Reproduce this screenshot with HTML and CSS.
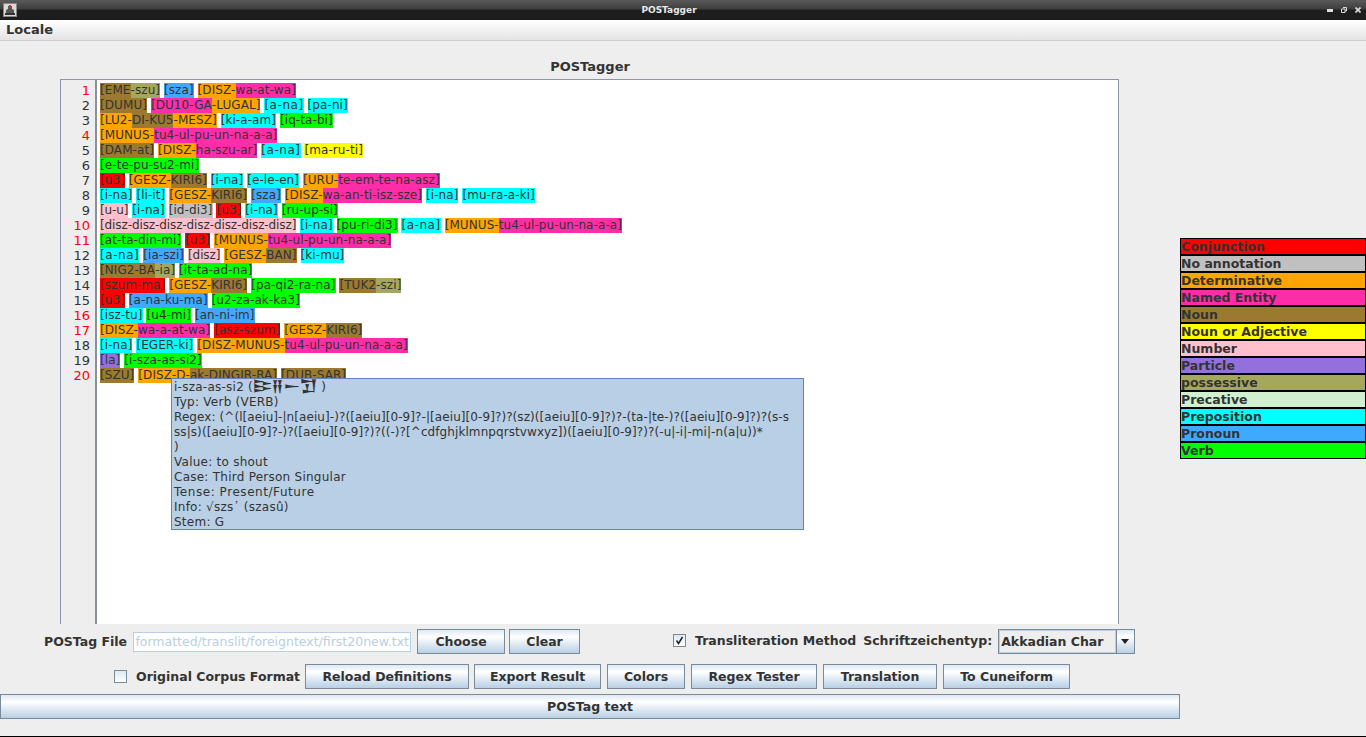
FILE: index.html
```html
<!DOCTYPE html>
<html lang="en">
<head>
    <meta charset="UTF-8">
    <meta name="viewport" content="width=device-width, initial-scale=1.0">
    <title>POSTagger</title>
    <link rel="stylesheet" href="styles.css">
</head>
<body>
    <div class="titlebar">
        <svg class="app-icon" width="14" height="14" viewBox="0 0 14 14">
            <rect x="0.5" y="0.5" width="13" height="13" fill="#d8d8d8" stroke="#888"/>
            <path d="M5 3h4v3l2 1v3H3V7l2-1z" fill="#555"/>
            <rect x="6" y="2" width="2" height="3" fill="#c33"/>
            <rect x="2" y="10" width="10" height="2" fill="#333"/>
        </svg>
        <span class="titlebar-text">POSTagger</span>
        <div class="window-buttons">
            <svg width="6" height="3" viewBox="0 0 6 3"><rect width="6" height="3" fill="#ddd"/></svg>
            <svg width="6" height="6" viewBox="0 0 6 6"><path d="M2 .5h3.500v3.500h-1.500M.5 2h3.500v3.500h-3.500z" fill="none" stroke="#ddd"/></svg>
            <svg width="6" height="6" viewBox="0 0 6 6"><path d="M.5 .5l5 5M5.500 .5l-5 5" stroke="#ddd" stroke-width="1.600"/></svg>
        </div>
    </div>
    <div class="menubar"><span>Locale</span></div>

    <div class="content">
        <div class="left">
            <div class="heading">POSTagger</div>
            <div class="editor">
                <div class="gutter">
                    <div class="err">1</div><div>2</div><div>3</div><div class="err">4</div><div>5</div>
                    <div>6</div><div>7</div><div>8</div><div>9</div><div class="err">10</div>
                    <div class="err">11</div><div>12</div><div>13</div><div>14</div><div>15</div>
                    <div class="err">16</div><div class="err">17</div><div>18</div><div>19</div><div class="err">20</div>
                </div>
                <div class="text">
                    <div><span class="noun">[EME</span><span class="poss">-szu]</span> <span class="pron">[sza]</span> <span class="det">[DISZ-</span><span class="ne">wa-at-wa]</span></div>
                    <div><span class="noun">[DUMU]</span> <span class="ne">[DU10-GA</span><span class="det">-LUGAL]</span> <span class="prep ana">[a-na]</span> <span class="prep">[pa-ni]</span></div>
                    <div><span class="det">[LU2-</span><span class="noun">DI-KU5</span><span class="det">-MESZ]</span> <span class="prep">[ki-a-am]</span> <span class="verb">[iq-ta-bi]</span></div>
                    <div><span class="det">[MUNUS-</span><span class="ne">tu4-ul-pu-un-na-a-a]</span></div>
                    <div><span class="noun">[DAM-at]</span> <span class="det">[DISZ-</span><span class="ne">ha-szu-ar]</span> <span class="prep ana">[a-na]</span> <span class="adj">[ma-ru-ti]</span></div>
                    <div><span class="verb">[e-te-pu-su2-mi]</span></div>
                    <div><span class="conj">[u3]</span> <span class="det">[GESZ-</span><span class="noun">KIRI6]</span> <span class="prep">[i-na]</span> <span class="prep">[e-le-en]</span> <span class="det">[URU-</span><span class="ne">te-em-te-na-asz]</span></div>
                    <div><span class="prep">[i-na]</span> <span class="prep">[li-it]</span> <span class="det">[GESZ-</span><span class="noun">KIRI6]</span> <span class="pron">[sza]</span> <span class="det">[DISZ-</span><span class="ne">wa-an-ti-isz-sze]</span> <span class="prep">[i-na]</span> <span class="prep">[mu-ra-a-ki]</span></div>
                    <div><span class="num">[u-u]</span> <span class="prep">[i-na]</span> <span class="none">[id-di3]</span> <span class="conj">[u3]</span> <span class="prep">[i-na]</span> <span class="verb">[ru-up-si]</span></div>
                    <div><span class="num">[disz-disz-disz-disz-disz-disz-disz]</span> <span class="prep">[i-na]</span> <span class="verb">[pu-ri-di3]</span> <span class="prep ana">[a-na]</span> <span class="det">[MUNUS-</span><span class="ne">tu4-ul-pu-un-na-a-a]</span></div>
                    <div><span class="verb">[at-ta-din-mi]</span> <span class="conj">[u3]</span> <span class="det">[MUNUS-</span><span class="ne">tu4-ul-pu-un-na-a-a]</span></div>
                    <div><span class="prep ana">[a-na]</span> <span class="pron">[ia-szi]</span> <span class="num">[disz]</span> <span class="det">[GESZ-</span><span class="noun">BAN]</span> <span class="prep">[ki-mu]</span></div>
                    <div><span class="noun">[NIG2-BA</span><span class="poss">-ia]</span> <span class="verb">[it-ta-ad-na]</span></div>
                    <div><span class="conj">[szum-ma]</span> <span class="det">[GESZ-</span><span class="noun">KIRI6]</span> <span class="verb">[pa-qi2-ra-na]</span> <span class="noun">[TUK2</span><span class="poss">-szi]</span></div>
                    <div><span class="conj">[u3]</span> <span class="pron">[a-na-ku-ma]</span> <span class="verb">[u2-za-ak-ka3]</span></div>
                    <div><span class="prep">[isz-tu]</span> <span class="verb">[u4-mi]</span> <span class="pron">[an-ni-im]</span></div>
                    <div><span class="det">[DISZ-</span><span class="ne">wa-a-at-wa]</span> <span class="conj">[asz-szum]</span> <span class="det">[GESZ-</span><span class="noun">KIRI6]</span></div>
                    <div><span class="prep">[i-na]</span> <span class="prep">[EGER-ki]</span> <span class="det">[DISZ-MUNUS-</span><span class="ne">tu4-ul-pu-un-na-a-a]</span></div>
                    <div><span class="part">[la]</span> <span class="verb">[i-sza-as-si2]</span></div>
                    <div><span class="noun">[SZU]</span> <span class="det">[DISZ-D-</span><span class="noun">ak-DINGIR-RA]</span> <span class="noun">[DUB-SAR]</span></div>
                </div>
                <div class="tooltip">
                    <div>i-sza-as-si2 (<span class="cuneiform">𒄿𒍝𒀸𒋛</span> )</div>
                    <div>Typ: Verb (VERB)</div>
                    <div class="regex">Regex: (^(l[aeiu]-|n[aeiu]-)?([aeiu][0-9]?-|[aeiu][0-9]?)?(sz)([aeiu][0-9]?)?-(ta-|te-)?([aeiu][0-9]?)?(s-s</div>
                    <div class="regex">ss|s)([aeiu][0-9]?-)?([aeiu][0-9]?)?((-)?[^cdfghjklmnpqrstvwxyz])([aeiu][0-9]?)?(-u|-i|-mi|-n(a|u))*</div>
                    <div>)</div>
                    <div>Value: to shout</div>
                    <div>Case: Third Person Singular</div>
                    <div class="tense">Tense: Present/Future</div>
                    <div>Info: √szs᾿ (szasû)</div>
                    <div>Stem: G</div>
                </div>
            </div>

            <div class="row-file">
                <label class="field-label">POSTag File</label>
                <input class="file-input" type="text" value="preformatted/translit/foreigntext/first20new.txt" disabled>
                <button class="btn btn-choose">Choose</button>
                <button class="btn btn-clear">Clear</button>
                <span class="check checked">
                    <svg width="9" height="9" viewBox="0 0 9 9"><path d="M1.500 4.500l2 3 4-6.500" fill="none" stroke="#222" stroke-width="1.500"/></svg>
                </span>
                <span class="field-label translit">Transliteration Method</span>
                <span class="field-label schrift">Schriftzeichentyp:</span>
                <div class="combo">
                    <span class="combo-value">Akkadian Char</span>
                    <span class="combo-arrow"></span>
                </div>
            </div>

            <div class="row-actions">
                <span class="check"></span>
                <span class="field-label corpus">Original Corpus Format</span>
                <button class="btn btn-reload">Reload Definitions</button>
                <button class="btn btn-export">Export Result</button>
                <button class="btn btn-colors">Colors</button>
                <button class="btn btn-regex">Regex Tester</button>
                <button class="btn btn-translation">Translation</button>
                <button class="btn btn-cuneiform">To Cuneiform</button>
            </div>

            <button class="btn btn-wide">POSTag text</button>
        </div>

        <div class="legend">
            <div class="conj">Conjunction</div>
            <div class="none">No annotation</div>
            <div class="det">Determinative</div>
            <div class="ne">Named Entity</div>
            <div class="noun">Noun</div>
            <div class="adj">Noun or Adjective</div>
            <div class="num">Number</div>
            <div class="part">Particle</div>
            <div class="poss">possessive</div>
            <div class="prec">Precative</div>
            <div class="prep">Preposition</div>
            <div class="pron">Pronoun</div>
            <div class="verb">Verb</div>
        </div>
    </div>
</body>
</html>
```

FILE: styles.css
```css
* {
    box-sizing: border-box;
}
body {
    font-family: "DejaVu Sans", sans-serif;
    font-size: 12px;
    color: #333;
    margin: 0;
    height: 737px;
    overflow: hidden;
    background-color: #eeeeee;
    border-bottom: 1px solid #000;
    display: flex;
    flex-direction: column;
}

/* window chrome */
.titlebar {
    height: 20px;
    flex: none;
    background: linear-gradient(#5a5a5a 0, #3e3e3e 9px, #1e1e1e 10px, #1c1c1c 100%);
    display: flex;
    align-items: center;
    padding: 0 5px 0 3px;
}
.titlebar-text {
    flex: 1;
    text-align: center;
    color: #e8e8e8;
    font-size: 9px;
    font-weight: bold;
    padding-right: 6px;
}
.window-buttons {
    display: flex;
    align-items: center;
    gap: 8px;
}
.menubar {
    height: 21px;
    flex: none;
    background: linear-gradient(#fff, #e4e4e4);
    border-bottom: 1px solid #ccc;
    padding: 2px 6px;
    font-size: 13px;
    font-weight: bold;
    line-height: 16px;
}

.content {
    flex: 1;
    display: flex;
    min-height: 0;
}
.left {
    width: 1180px;
    flex: none;
    display: flex;
    flex-direction: column;
}
.heading {
    text-align: center;
    font-size: 13px;
    font-weight: bold;
    line-height: 16px;
    padding-top: 18px;
    height: 38px;
}

/* text pane */
.editor {
    position: relative;
    flex: none;
    height: 545px;
    width: 1059px;
    margin-left: 60px;
    background-color: white;
    border: 1px solid #8a97a8;
    border-bottom: none;
    display: flex;
}
.gutter {
    width: 36px;
    background-color: #eeeeee;
    border-right: 2px solid #8a8f99;
    padding: 3px 5px 0 0;
    text-align: right;
    font-size: 13px;
    line-height: 15px;
    flex: none;
}
.err {
    color: red;
}
.text {
    padding: 3px 0 0 3px;
    line-height: 15px;
    letter-spacing: 0.08px;
}
.text div {
    height: 15px;
    white-space: pre;
}
.text span {
    display: inline-block;
    height: 15px;
}
.text .num {
    letter-spacing: -0.1px;
}
.text .ana {
    letter-spacing: 0.55px;
}
.tooltip {
    position: absolute;
    left: 110px;
    top: 298px;
    width: 633px;
    height: 152px;
    background-color: #b8cfe5;
    border: 1px solid #6382bf;
    padding: 0 2px;
    line-height: 15px;
    white-space: nowrap;
    letter-spacing: 0.25px;
}
.tooltip .regex {
    letter-spacing: 0.08px;
}
.tooltip .tense {
    letter-spacing: 0.55px;
}
.cuneiform {
    font-size: 15px;
    font-weight: bold;
    line-height: 14px;
}

/* annotation colours */
.conj { background-color: #ff0000; }
.none { background-color: #c0c0c0; }
.det { background-color: #ffa500; }
.ne { background-color: #ff2da8; }
.noun { background-color: #9b7a30; }
.adj { background-color: #ffff00; }
.num { background-color: #ffc0cb; }
.part { background-color: #9370db; }
.poss { background-color: #a5a85c; }
.prec { background-color: #d0f0d0; }
.prep { background-color: #00ffff; }
.pron { background-color: #3fa9ff; }
.verb { background-color: #00ff00; }

.legend {
    width: 186px;
    height: 221px;
    margin-top: 197px;
    padding: 1px;
    background-color: #000;
    display: flex;
    flex-direction: column;
    gap: 2px;
    font-size: 12.5px;
    font-weight: bold;
    line-height: 15px;
}
.legend div {
    height: 15px;
    overflow: hidden;
}

/* controls */
.btn {
    font-family: "DejaVu Sans", sans-serif;
    font-size: 12.5px;
    font-weight: bold;
    color: #333;
    height: 25px;
    padding: 0;
    border: 1px solid #7a8a99;
    background: linear-gradient(#dde8f3 0, #fff 30%, #b8cfe5 100%);
}
.field-label {
    font-size: 12.5px;
    font-weight: bold;
}
.row-file {
    display: flex;
    align-items: center;
    height: 25px;
    margin-top: 5px;
    padding-left: 44px;
}
.file-input {
    width: 278px;
    height: 20px;
    margin-left: 6px;
    padding: 0 1px;
    border: 1px solid #b8cfe5;
    background-color: white;
    color: #b8cfe5;
    font-family: "DejaVu Sans", sans-serif;
    font-size: 12.5px;
    direction: rtl;
    opacity: 1;
}
.btn-choose {
    width: 88px;
    margin-left: 6px;
}
.btn-clear {
    width: 71px;
    margin-left: 4px;
}
.check {
    width: 13px;
    height: 13px;
    border: 1px solid #7a8a99;
    background: linear-gradient(#dde8f3, #fff);
    display: flex;
    align-items: center;
    justify-content: center;
    flex: none;
}
.check.checked {
    margin-left: 93px;
    margin-bottom: 2px;
}
.translit {
    margin-left: 9px;
    margin-bottom: 2px;
}
.schrift {
    margin-left: 7px;
    margin-bottom: 2px;
}
.combo {
    display: flex;
    width: 137px;
    height: 25px;
    margin-left: 6px;
    border: 1px solid #7a8a99;
}
.combo-value {
    flex: 1;
    background-color: #eeeeee;
    border: 1px solid #b8cfe5;
    font-size: 12.5px;
    font-weight: bold;
    line-height: 21px;
    padding-left: 1px;
}
.combo-arrow {
    width: 18px;
    border-left: 1px solid #7a8a99;
    background: linear-gradient(#dde8f3 0, #fff 30%, #b8cfe5 100%);
    position: relative;
}
.combo-arrow::after {
    content: "";
    position: absolute;
    left: 4px;
    top: 9px;
    border-left: 4px solid transparent;
    border-right: 4px solid transparent;
    border-top: 5px solid #222;
}
.row-actions {
    display: flex;
    align-items: center;
    height: 25px;
    margin-top: 10px;
    padding-left: 114px;
}
.corpus {
    margin-left: 9px;
    margin-right: 5px;
}
.btn-reload { width: 164px; }
.btn-export { width: 127px; margin-left: 5px; }
.btn-colors { width: 78px; margin-left: 6px; }
.btn-regex { width: 126px; margin-left: 6px; }
.btn-translation { width: 114px; margin-left: 6px; }
.btn-cuneiform { width: 127px; margin-left: 6px; }
.btn-wide {
    width: 1180px;
    margin-top: 5px;
}
```
